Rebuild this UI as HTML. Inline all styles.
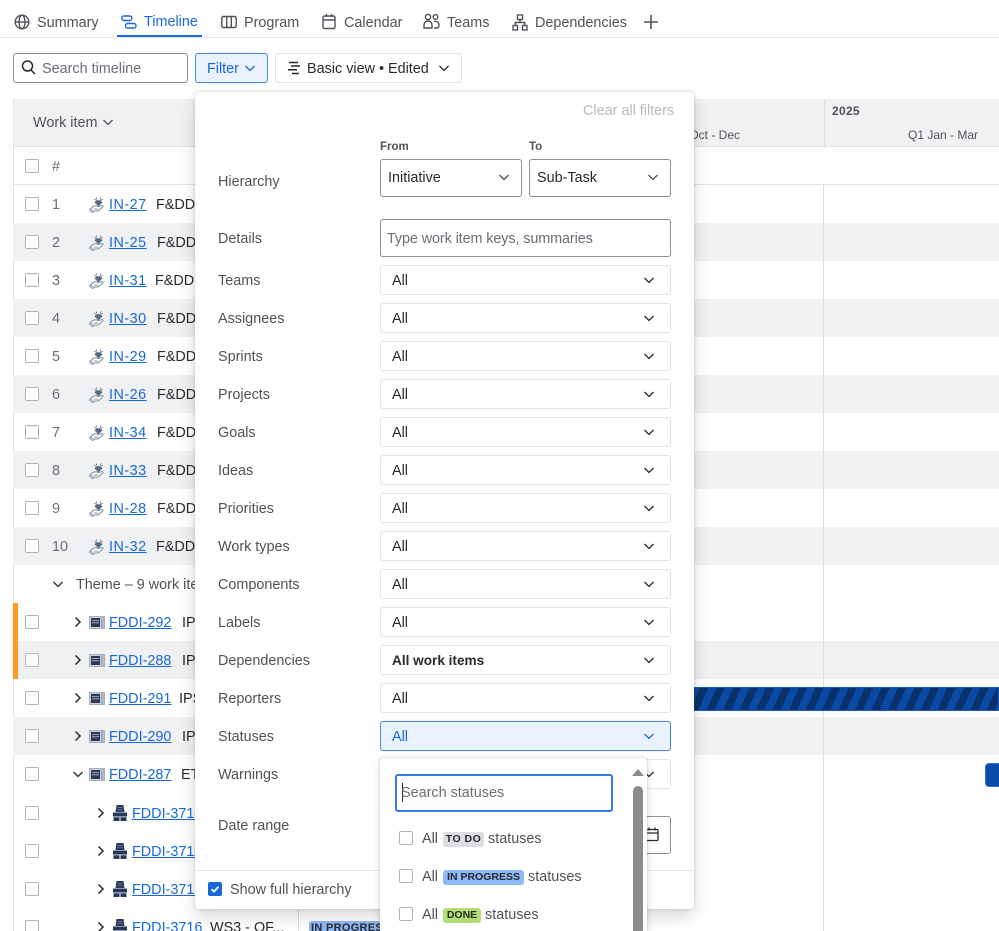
<!DOCTYPE html>
<html><head><meta charset="utf-8">
<style>
html,body{margin:0;padding:0;background:#fff;width:999px;height:931px;overflow:hidden}
body{position:relative;font-family:"Liberation Sans",sans-serif;font-size:14.4px;letter-spacing:0;color:#292a2e}
div,span,a,svg{position:absolute;box-sizing:border-box}
#w{left:0;top:0;width:999px;height:931px;overflow:hidden;background:#fff}
.t{height:20px;line-height:20px;white-space:nowrap;margin-top:1px}
.g{color:#505258}
.p{color:#6b6e76}
a.t{color:#1868db;text-decoration:underline}
a.k{letter-spacing:.5px}
.bar{left:13px;width:986px;height:38px;background:#f0f1f2}
.cb{left:25px;width:14px;height:14px;border:1.5px solid #b1b3b8;border-radius:2px;background:#fff}
.n{left:52px;color:#6b6e76}
.i{left:89px;width:16px;height:16px}
.i3{left:113px;width:14px;height:16px}
.ch{width:12px;height:12px}
.l{left:218px;color:#505258}
.s{left:380px;width:291px;height:30px;border:1px solid #e2e3e6;border-radius:3px;background:#fff}
.s b{position:absolute;left:11px;top:5px;line-height:20px;font-weight:400;color:#292a2e}
.s svg{left:262px;top:8px;width:12px;height:12px}
.lo{height:15px;line-height:15px;border-radius:3px;font-size:10.5px;font-weight:700;letter-spacing:0;color:#292a2e;white-space:nowrap}
svg{fill:none;stroke:#505258;stroke-width:1.4}
</style></head><body><div id="w">
<svg width="0" height="0" style="left:0;top:0"><defs>
<symbol id="d" viewBox="0 0 12 12"><path d="M1.5 4l4.5 4.5L10.500 4" fill="none" stroke="currentColor" stroke-width="1.3"/></symbol>
<symbol id="r" viewBox="0 0 12 12"><path d="M3.500 1.500L8 6l-4.500 4.500" fill="none" stroke="#292a2e" stroke-width="1.500"/></symbol>
<symbol id="hand" viewBox="0 0 16 16"><path d="M7 0.500l1 2M12 0.500l-1 2M14 2.500h-1.500M5 2.500h1.500" stroke="#7a8798" stroke-width="1"/><path d="M7 3.500h5l1 2-3.500 3.500L6 5.500z" fill="#5b6b84" stroke="#5b6b84" stroke-width=".6"/><path d="M.5 13l3.500-3.500c2-1.500 4-.5 5.500 0l3.500-1c1.300 0 1.300 1 .7 1.500L9 14H5.500l-2 1.500z" fill="#fff" stroke="#8593a5" stroke-width="1.100"/><path d="M5 12h4M1.500 11l2.500 3" stroke="#8593a5" stroke-width=".9"/></symbol>
<symbol id="bld" viewBox="0 0 16 13" preserveAspectRatio="none"><rect width="16" height="13" fill="#a4aebf" stroke="none"/><rect x="1" y="1" width="14" height="11" fill="#ccd2dc" stroke="none"/><rect x="2" y="2" width="9" height="9" fill="#2c3a55" stroke="none"/><path d="M3 4.500h7M3 6.800h7" stroke="#b7c0ce" stroke-width=".8"/><path d="M12.500 1v11M14 1v11" stroke="#8d98aa" stroke-width=".8"/></symbol>
<symbol id="stk" viewBox="0 0 14 16"><path d="M3.500 0h7l1 7h-9z" fill="#27375a" stroke="none"/><path d="M4.500 2.500h5M4.200 4.800h5.600" stroke="#8090ad" stroke-width=".7"/><path d="M0 7.500h14v4H0z" fill="#27375a" stroke="none"/><path d="M.5 12.300h6V16h-6zM7.500 12.300h6V16h-6z" fill="#27375a" stroke="none"/></symbol>
</defs></svg>

<!-- Tabs -->
<div style="left:0;top:37px;width:999px;height:1px;background:#e4e5e8"></div>
<div style="left:117px;top:35px;width:85px;height:2px;background:#1868db"></div>
<svg style="left:14px;top:14px;width:16px;height:16px" viewBox="0 0 16 16"><circle cx="8" cy="8" r="6.800"/><ellipse cx="8" cy="8" rx="3" ry="6.800"/><path d="M1.200 8h13.600"/></svg>
<div class="t g" style="left:37px;top:12px">Summary</div>
<svg style="left:121px;top:14px;width:16px;height:16px;stroke:#1868db" viewBox="0 0 16 16"><rect x=".8" y="2" width="10" height="4.500" rx="2"/><rect x="4.500" y="9.500" width="10.500" height="4.500" rx="2"/></svg>
<div class="t" style="left:144px;top:11px;color:#1868db">Timeline</div>
<svg style="left:221px;top:14px;width:16px;height:16px" viewBox="0 0 16 16"><rect x=".8" y="2.500" width="14.400" height="11" rx="1.500"/><path d="M5.700 2.500v11M10.300 2.500v11"/></svg>
<div class="t g" style="left:244px;top:12px">Program</div>
<svg style="left:321px;top:13px;width:16px;height:17px" viewBox="0 0 16 17"><rect x="2" y="3" width="12" height="12.500" rx="1.500"/><path d="M2 7h12M5.500 1v3M10.500 1v3"/></svg>
<div class="t g" style="left:344px;top:12px">Calendar</div>
<svg style="left:423px;top:13px;width:17px;height:17px" viewBox="0 0 17 17"><circle cx="5" cy="4" r="2.600"/><circle cx="12.500" cy="4" r="2.300"/><path d="M1 15v-3c0-2.500 2-4 4-4s4 1.500 4 4v3zM11 8.500c3-.8 5 1 5 3.500 0 2-1 3-3 3h-2"/></svg>
<div class="t g" style="left:447px;top:12px">Teams</div>
<svg style="left:512px;top:14px;width:16px;height:17px" viewBox="0 0 16 17"><rect x="5.500" y="1" width="5" height="4.500"/><rect x="1" y="11.500" width="4.500" height="4.500"/><rect x="10.500" y="11.500" width="4.500" height="4.500"/><path d="M8 5.500V8.500M3.200 11.500V8.500h9.600v3"/></svg>
<div class="t g" style="left:535px;top:12px">Dependencies</div>
<svg style="left:643px;top:14px;width:16px;height:16px;stroke-width:1.600" viewBox="0 0 16 16"><path d="M8 1v14M1 8h14"/></svg>

<!-- Toolbar -->
<div style="left:13px;top:53px;width:175px;height:30px;border:1px solid #8c8f97;border-radius:3px"></div>
<svg style="left:21px;top:60px;width:15px;height:15px;stroke:#292a2e;stroke-width:1.500" viewBox="0 0 15 15"><circle cx="6.500" cy="6" r="5"/><path d="M10 10l4 4"/></svg>
<div class="t p" style="left:42px;top:58px">Search timeline</div>
<div style="left:195px;top:53px;width:73px;height:30px;border:1px solid #4688ec;border-radius:3px;background:#e9f2fe"></div>
<div class="t" style="left:207px;top:58px;color:#1868db">Filter</div>
<svg class="ch" style="left:244px;top:62px;color:#1868db"><use href="#d"/></svg>
<div style="left:275px;top:53px;width:187px;height:30px;border:1px solid #e2e3e6;border-radius:3px"></div>
<svg style="left:287px;top:61px;width:14px;height:14px;stroke:#292a2e;stroke-width:1.500" viewBox="0 0 14 14"><path d="M2 1.500h9M4 5h9M1 8.700h9M5 12.500h7"/></svg>
<div class="t" style="left:307px;top:58px">Basic view • Edited</div>
<svg class="ch" style="left:438px;top:62px;color:#292a2e"><use href="#d"/></svg>

<!-- Table bg -->
<div style="left:13px;top:99px;width:986px;height:48px;background:#f0f1f2;border-bottom:1px solid #dfe0e3"></div>
<div style="left:13px;top:99px;width:1px;height:832px;background:#e2e3e6"></div>
<div class="t g" style="left:33px;top:112px">Work item</div>
<svg class="ch" style="left:102px;top:116px;color:#505258"><use href="#d"/></svg>
<div style="left:824px;top:99px;width:1px;height:48px;background:#dcdde0"></div>
<div class="t" style="left:832px;top:100px;font-size:12px;font-weight:700;letter-spacing:.3px;color:#505258">2025</div>
<div class="t g" style="left:908px;top:124px;font-size:12px">Q1 Jan - Mar</div>
<div class="t g" style="left:670px;top:124px;font-size:12px">Q4 Oct - Dec</div>
<div style="left:13px;top:184px;width:986px;height:1px;background:#e2e3e6"></div>

<!-- Striped rows -->
<div class="bar" style="top:223px"></div>
<div class="bar" style="top:299px"></div>
<div class="bar" style="top:375px"></div>
<div class="bar" style="top:451px"></div>
<div class="bar" style="top:527px"></div>
<div class="bar" style="top:641px"></div>
<div class="bar" style="top:717px"></div>
<div style="left:823px;top:185px;width:1px;height:746px;background:#dcdde0"></div>
<div style="left:298px;top:909px;width:1px;height:22px;background:#dcdde0"></div>

<!-- Gantt bars -->
<div style="left:600px;top:687px;width:399px;height:24px;border:1px solid #1558bc;background:repeating-linear-gradient(114deg,#09326c 0,#09326c 7.530px,#0b4aa4 7.530px,#0b4aa4 15.060px)"></div>
<div style="left:985px;top:763px;width:20px;height:24px;border:1px solid #2a6fd6;border-radius:4px;background:#0c4aa8"></div>

<!-- Orange bar -->
<div style="left:13px;top:603px;width:5px;height:76px;background:#ff991f"></div>

<!-- Checkboxes -->
<div class="cb" style="top:159px"></div>
<div class="cb" style="top:197px"></div><div class="cb" style="top:235px"></div><div class="cb" style="top:273px"></div><div class="cb" style="top:311px"></div><div class="cb" style="top:349px"></div><div class="cb" style="top:387px"></div><div class="cb" style="top:425px"></div><div class="cb" style="top:463px"></div><div class="cb" style="top:501px"></div><div class="cb" style="top:539px"></div>
<div class="cb" style="top:615px"></div><div class="cb" style="top:653px"></div><div class="cb" style="top:691px"></div><div class="cb" style="top:729px"></div><div class="cb" style="top:767px"></div><div class="cb" style="top:806px"></div><div class="cb" style="top:844px"></div><div class="cb" style="top:882px"></div><div class="cb" style="top:920px"></div>

<div class="t n" style="top:156px">#</div>
<div class="t n" style="top:194px">1</div><div class="t n" style="top:232px">2</div><div class="t n" style="top:270px">3</div><div class="t n" style="top:308px">4</div><div class="t n" style="top:346px">5</div><div class="t n" style="top:384px">6</div><div class="t n" style="top:422px">7</div><div class="t n" style="top:460px">8</div><div class="t n" style="top:498px">9</div><div class="t n" style="top:536px">10</div>

<svg class="i" style="top:197px"><use href="#hand"/></svg><a class="t k" style="left:109px;top:194px">IN-27</a><div class="t" style="left:156px;top:194px">F&amp;DD</div>
<svg class="i" style="top:235px"><use href="#hand"/></svg><a class="t k" style="left:109px;top:232px">IN-25</a><div class="t" style="left:157px;top:232px">F&amp;DD</div>
<svg class="i" style="top:273px"><use href="#hand"/></svg><a class="t k" style="left:109px;top:270px">IN-31</a><div class="t" style="left:155px;top:270px">F&amp;DD 1</div>
<svg class="i" style="top:311px"><use href="#hand"/></svg><a class="t k" style="left:109px;top:308px">IN-30</a><div class="t" style="left:157px;top:308px">F&amp;DD</div>
<svg class="i" style="top:349px"><use href="#hand"/></svg><a class="t k" style="left:109px;top:346px">IN-29</a><div class="t" style="left:157px;top:346px">F&amp;DD</div>
<svg class="i" style="top:387px"><use href="#hand"/></svg><a class="t k" style="left:109px;top:384px">IN-26</a><div class="t" style="left:157px;top:384px">F&amp;DD</div>
<svg class="i" style="top:425px"><use href="#hand"/></svg><a class="t k" style="left:109px;top:422px">IN-34</a><div class="t" style="left:157px;top:422px">F&amp;DD</div>
<svg class="i" style="top:463px"><use href="#hand"/></svg><a class="t k" style="left:109px;top:460px">IN-33</a><div class="t" style="left:157px;top:460px">F&amp;DD</div>
<svg class="i" style="top:501px"><use href="#hand"/></svg><a class="t k" style="left:109px;top:498px">IN-28</a><div class="t" style="left:157px;top:498px">F&amp;DD</div>
<svg class="i" style="top:539px"><use href="#hand"/></svg><a class="t k" style="left:109px;top:536px">IN-32</a><div class="t" style="left:156px;top:536px">F&amp;DD</div>

<svg class="ch" style="left:52px;top:578px;color:#292a2e"><use href="#d"/></svg>
<div class="t g" style="left:76px;top:574px">Theme – 9 work items</div>

<svg class="ch" style="left:72px;top:616px"><use href="#r"/></svg><svg class="i" style="top:616px;height:13px"><use href="#bld"/></svg><a class="t" style="left:109px;top:612px">FDDI-292</a><div class="t" style="left:182px;top:612px">IPS</div>
<svg class="ch" style="left:72px;top:654px"><use href="#r"/></svg><svg class="i" style="top:654px;height:13px"><use href="#bld"/></svg><a class="t" style="left:109px;top:650px">FDDI-288</a><div class="t" style="left:182px;top:650px">IPS</div>
<svg class="ch" style="left:72px;top:692px"><use href="#r"/></svg><svg class="i" style="top:692px;height:13px"><use href="#bld"/></svg><a class="t" style="left:109px;top:688px">FDDI-291</a><div class="t" style="left:179px;top:688px">IPS</div>
<svg class="ch" style="left:72px;top:730px"><use href="#r"/></svg><svg class="i" style="top:730px;height:13px"><use href="#bld"/></svg><a class="t" style="left:109px;top:726px">FDDI-290</a><div class="t" style="left:182px;top:726px">IPS</div>
<svg class="ch" style="left:72px;top:768px;color:#292a2e"><use href="#d"/></svg><svg class="i" style="top:768px;height:13px"><use href="#bld"/></svg><a class="t" style="left:109px;top:764px">FDDI-287</a><div class="t" style="left:181px;top:764px">ETL</div>

<svg class="ch" style="left:95px;top:807px"><use href="#r"/></svg><svg class="i3" style="top:805px"><use href="#stk"/></svg><a class="t" style="left:132px;top:803px">FDDI-3714</a>
<svg class="ch" style="left:95px;top:845px"><use href="#r"/></svg><svg class="i3" style="top:843px"><use href="#stk"/></svg><a class="t" style="left:132px;top:841px">FDDI-3711</a>
<svg class="ch" style="left:95px;top:883px"><use href="#r"/></svg><svg class="i3" style="top:881px"><use href="#stk"/></svg><a class="t" style="left:132px;top:879px">FDDI-3715</a>
<svg class="ch" style="left:95px;top:921px"><use href="#r"/></svg><svg class="i3" style="top:919px"><use href="#stk"/></svg><a class="t" style="left:132px;top:917px">FDDI-3716</a><div class="t" style="left:210px;top:917px">WS3 - QF...</div>
<div class="lo" style="left:309px;top:921px;width:72px;background:#8fb8f6;overflow:hidden;padding-left:2px;font-size:11px;letter-spacing:.3px">IN PROGRESS</div>

<!-- Filter popup -->
<div style="left:195px;top:92px;width:499px;height:817px;background:#fff;border-radius:4px;box-shadow:0 8px 16px rgba(30,31,33,.16),0 0 3px rgba(30,31,33,.2)"></div>
<div class="t" style="left:583px;top:100px;color:#b7b9be">Clear all filters</div>
<div class="t" style="left:380px;top:136px;font-size:11.5px;font-weight:700;color:#505258">From</div>
<div class="t" style="left:529px;top:136px;font-size:11.5px;font-weight:700;color:#505258">To</div>

<div class="t l" style="top:171px">Hierarchy</div>
<div class="t l" style="top:228px">Details</div>
<div class="t l" style="top:270px">Teams</div>
<div class="t l" style="top:308px">Assignees</div>
<div class="t l" style="top:346px">Sprints</div>
<div class="t l" style="top:384px">Projects</div>
<div class="t l" style="top:422px">Goals</div>
<div class="t l" style="top:460px">Ideas</div>
<div class="t l" style="top:498px">Priorities</div>
<div class="t l" style="top:536px">Work types</div>
<div class="t l" style="top:574px">Components</div>
<div class="t l" style="top:612px">Labels</div>
<div class="t l" style="top:650px">Dependencies</div>
<div class="t l" style="top:688px">Reporters</div>
<div class="t l" style="top:726px">Statuses</div>
<div class="t l" style="top:764px">Warnings</div>
<div class="t l" style="top:815px">Date range</div>

<div style="left:380px;top:159px;width:142px;height:38px;border:1px solid #8c8f97;border-radius:3px"></div>
<div class="t" style="left:388px;top:167px">Initiative</div>
<svg class="ch" style="left:498px;top:171px;color:#505258"><use href="#d"/></svg>
<div style="left:529px;top:159px;width:142px;height:38px;border:1px solid #8c8f97;border-radius:3px"></div>
<div class="t" style="left:537px;top:167px">Sub-Task</div>
<svg class="ch" style="left:647px;top:171px;color:#505258"><use href="#d"/></svg>
<div style="left:380px;top:219px;width:291px;height:38px;border:1px solid #8c8f97;border-radius:3px"></div>
<div class="t p" style="left:387px;top:228px;letter-spacing:-.1px">Type work item keys, summaries</div>

<div class="s" style="top:265px"><b>All</b><svg style="color:#292a2e"><use href="#d"/></svg></div>
<div class="s" style="top:303px"><b>All</b><svg style="color:#292a2e"><use href="#d"/></svg></div>
<div class="s" style="top:341px"><b>All</b><svg style="color:#292a2e"><use href="#d"/></svg></div>
<div class="s" style="top:379px"><b>All</b><svg style="color:#292a2e"><use href="#d"/></svg></div>
<div class="s" style="top:417px"><b>All</b><svg style="color:#292a2e"><use href="#d"/></svg></div>
<div class="s" style="top:455px"><b>All</b><svg style="color:#292a2e"><use href="#d"/></svg></div>
<div class="s" style="top:493px"><b>All</b><svg style="color:#292a2e"><use href="#d"/></svg></div>
<div class="s" style="top:531px"><b>All</b><svg style="color:#292a2e"><use href="#d"/></svg></div>
<div class="s" style="top:569px"><b>All</b><svg style="color:#292a2e"><use href="#d"/></svg></div>
<div class="s" style="top:607px"><b>All</b><svg style="color:#292a2e"><use href="#d"/></svg></div>
<div class="s" style="top:645px"><b style="font-weight:700;font-size:13.6px">All work items</b><svg style="color:#292a2e"><use href="#d"/></svg></div>
<div class="s" style="top:683px"><b>All</b><svg style="color:#292a2e"><use href="#d"/></svg></div>
<div class="s" style="top:721px;background:#e9f2fe;border-color:#4688ec"><b style="color:#1868db">All</b><svg style="color:#1868db"><use href="#d"/></svg></div>
<div class="s" style="top:759px"><b></b><svg style="color:#292a2e"><use href="#d"/></svg></div>
<div style="left:380px;top:816px;width:291px;height:38px;border:1px solid #8c8f97;border-radius:3px"></div>
<svg style="left:645px;top:827px;width:14px;height:15px;stroke:#292a2e;stroke-width:1.300" viewBox="0 0 14 15"><rect x="1" y="2.500" width="12" height="11" rx="1"/><path d="M1 6h12M4 .5v3M10 .5v3"/></svg>

<div style="left:195px;top:870px;width:499px;height:1px;background:#e2e3e6"></div>
<div style="left:208px;top:882px;width:14px;height:14px;border-radius:2px;background:#1868db"></div>
<svg style="left:208px;top:882px;width:14px;height:14px;stroke:#fff;stroke-width:1.800" viewBox="0 0 14 14"><path d="M3.500 7.200l2.500 2.500 4.500-5"/></svg>
<div class="t g" style="left:230px;top:879px">Show full hierarchy</div>

<!-- Status dropdown -->
<div style="left:380px;top:758px;width:267px;height:190px;background:#fff;border-radius:4px;box-shadow:0 2px 8px rgba(30,31,33,.16),0 0 2px rgba(30,31,33,.18)"></div>
<div style="left:395px;top:774px;width:218px;height:38px;border:2px solid #2f7de8;border-radius:3px;background:#fff"></div>
<div style="left:402px;top:783px;width:1px;height:19px;background:#292a2e"></div>
<div class="t p" style="left:401px;top:782px">Search statuses</div>
<svg style="left:631px;top:768px;width:14px;height:9px;stroke:none;fill:#8c8c8c" viewBox="0 0 14 9"><path d="M7 1l6 7H1z" fill="#8c8c8c" stroke="none"/></svg>
<div style="left:633px;top:786px;width:10px;height:160px;border-radius:5px;background:#8c8c8c"></div>

<div class="cb" style="left:399px;top:831px"></div>
<div class="t g" style="left:422px;top:828px">All</div>
<div class="lo" style="left:443px;top:832px;width:41px;background:#dddee1;text-align:center;letter-spacing:.5px">TO DO</div>
<div class="t g" style="left:488px;top:828px">statuses</div>
<div class="cb" style="left:399px;top:869px"></div>
<div class="t g" style="left:422px;top:866px">All</div>
<div class="lo" style="left:443px;top:870px;width:81px;background:#8fb8f6;text-align:center">IN PROGRESS</div>
<div class="t g" style="left:528px;top:866px">statuses</div>
<div class="cb" style="left:399px;top:907px"></div>
<div class="t g" style="left:422px;top:904px">All</div>
<div class="lo" style="left:443px;top:908px;width:38px;background:#b3df72;text-align:center">DONE</div>
<div class="t g" style="left:485px;top:904px">statuses</div>
</div></body></html>
